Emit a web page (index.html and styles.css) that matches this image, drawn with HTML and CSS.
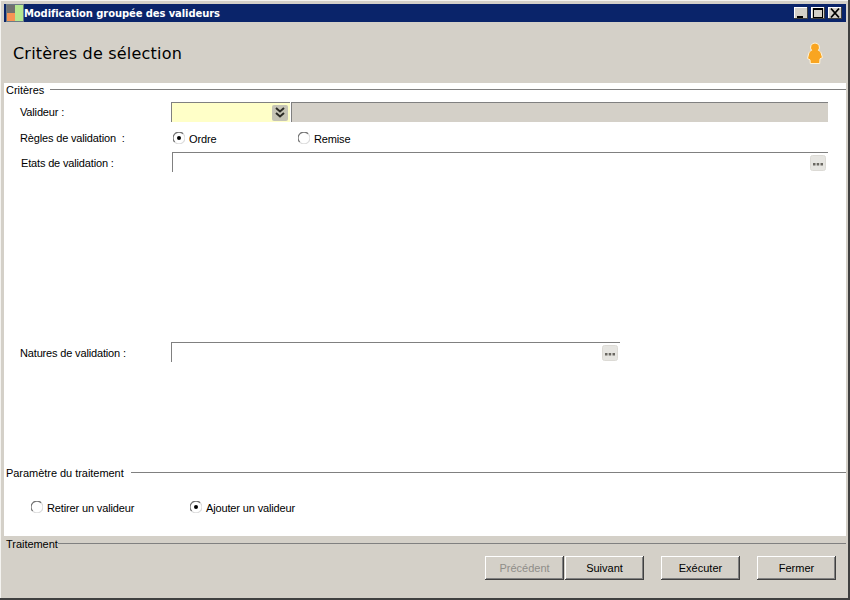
FILE: index.html
```html
<!DOCTYPE html>
<html lang="fr">
<head>
<meta charset="utf-8">
<title>Modification groupée des valideurs</title>
<link rel="stylesheet" href="styles.css">
</head>
<body>
<svg class="defs" width="0" height="0" aria-hidden="true">
  <symbol id="radio" viewBox="0 0 12 12">
    <circle cx="6" cy="6" r="5.5" fill="#fff"/>
    <path d="M1.800 10.200A5.500 5.500 0 0 1 10.200 1.800" fill="none" stroke="#777" stroke-width="1.200"/>
    <path d="M10.200 1.800A5.500 5.500 0 0 1 1.800 10.200" fill="none" stroke="#ddd" stroke-width="1.200"/>
  </symbol>
  <symbol id="dots" viewBox="0 0 16 16">
    <rect x=".5" y=".5" width="15" height="15" rx="2" fill="#e6e5e1" stroke="#dcdad5"/>
    <path d="M3 8h2.500v2.500H3zM6.700 8h2.500v2.500H6.700zM10.500 8H13v2.500h-2.500z" fill="#6a6862"/>
  </symbol>
</svg>
<div class="window">
  <div class="titlebar">
    <svg class="app-icon" width="18" height="18" viewBox="0 0 18 18"><rect width="18" height="18" fill="#6b7b86"/><rect x="1" y="1" width="8" height="8" fill="#71716f"/><rect x="1" y="9" width="8" height="8" fill="#f79455"/><rect x="9" y="1" width="8" height="16" fill="#b5e890"/></svg>
    <span class="title">Modification groupée des valideurs</span>
    <div class="win-controls">
      <span class="win-btn"><svg width="14" height="12" viewBox="0 0 14 12"><path d="M3 9h6v2H3z"/></svg></span>
      <span class="win-btn"><svg width="14" height="12" viewBox="0 0 14 12"><path d="M2 1h10v10H2zM3 3v7h8V3z" fill-rule="evenodd"/></svg></span>
      <span class="win-btn"><svg width="14" height="12" viewBox="0 0 14 12"><path d="M3 1.500l8 9M11 1.500l-8 9" stroke="#000" stroke-width="1.800" fill="none"/></svg></span>
    </div>
  </div>
  <header class="page-head">
    <h1>Critères de sélection</h1>
    <svg class="person" width="18" height="24" viewBox="0 0 18 24">
      <path d="M9 1a4.500 4.500 0 0 1 3.400 7.400c1.600.6 2.600 1.800 3 3.600l1.100 3.500-2.500 1.300-.3 4.700H4.300L4 17.800l-2.500-1.300L2.600 12c.4-1.800 1.400-3 3-3.600A4.500 4.500 0 0 1 9 1z" fill="#f9a521" stroke="#fff3d8" stroke-width="1"/>
    </svg>
  </header>
  <main class="content">
    <div class="legend legend-criteres"><span>Critères</span></div>
    <div class="row row-valideur">
      <label class="lbl">Valideur :</label>
      <div class="combo"><svg class="combo-btn" width="16" height="16" viewBox="0 0 16 16"><rect width="16" height="16" rx="2" fill="#c5c3b5"/><path d="M4 3l4 3.500L12 3M4 8l4 3.500L12 8" fill="none" stroke="#2b2b25" stroke-width="2"/></svg></div>
      <div class="combo-desc"></div>
    </div>
    <div class="row row-regles">
      <label class="lbl">Règles de validation&nbsp; :</label>
      <div class="radio-group">
        <span class="radio"><svg width="12" height="12"><use href="#radio"/><circle cx="6" cy="6" r="2" fill="#000"/></svg>Ordre</span>
        <span class="radio"><svg width="12" height="12"><use href="#radio"/></svg>Remise</span>
      </div>
    </div>
    <div class="row row-etats">
      <label class="lbl lbl-etats">Etats de validation :</label>
      <div class="listbox listbox-etats"><svg width="16" height="16"><use href="#dots"/></svg></div>
    </div>
    <div class="row row-natures">
      <label class="lbl lbl-natures">Natures de validation :</label>
      <div class="listbox listbox-natures"><svg width="16" height="16"><use href="#dots"/></svg></div>
    </div>
    <div class="legend legend-param"><span>Paramètre du traitement</span></div>
    <div class="radio-group treatment">
      <span class="radio"><svg width="12" height="12"><use href="#radio"/></svg>Retirer un valideur</span>
      <span class="radio"><svg width="12" height="12"><use href="#radio"/><circle cx="6" cy="6" r="2" fill="#000"/></svg>Ajouter un valideur</span>
    </div>
  </main>
  <footer class="footer">
    <div class="legend legend-trait"><span>Traitement</span></div>
    <div class="actions">
      <button class="btn" disabled>Précédent</button>
      <button class="btn btn-next">Suivant</button>
      <button class="btn">Exécuter</button>
      <button class="btn">Fermer</button>
    </div>
  </footer>
</div>
</body>
</html>
```
FILE: styles.css
```css
* { box-sizing: border-box; }
html, body { margin: 0; padding: 0; }
body { width: 850px; height: 600px; overflow: hidden; font-family: "Liberation Sans", Arial, sans-serif; font-size: 11px; color: #000; background: #d4d0c8; }
.defs { display: block; height: 0; position: absolute; }

.window { width: 850px; height: 600px; padding: 4px; display: flex; flex-direction: column; background: #d4d0c8; box-shadow: inset -2px -2px 0 #404040, inset 1px 1px 0 #f4f3f0; }

.titlebar { height: 18px; flex: none; display: flex; align-items: center; padding-left: 2px; background: #0a246a; color: #fff; }
.app-icon { flex: none; }
.title { margin-left: 0; font: bold 10px "DejaVu Sans", sans-serif; letter-spacing: -.1px; }
.win-controls { margin-left: auto; display: flex; gap: 3px; padding-right: 4px; }
.win-btn { width: 14px; height: 12px; display: block; background: #d4d0c8; box-shadow: inset -1px -1px 0 #404040, inset 1px 1px 0 #fff; }
.win-btn svg { display: block; }

.page-head { height: 61px; flex: none; display: flex; align-items: center; justify-content: space-between; padding: 0 22px 0 9px; }
.page-head h1 { margin: 2px 0 0; font: 400 16px "DejaVu Sans", sans-serif; letter-spacing: .2px; }
.person { margin-top: 3px; }

.content { height: 453px; flex: none; background: #fff; display: flex; flex-direction: column; position: relative; }

.legend { display: flex; align-items: center; gap: 6px; padding-left: 2px; line-height: 13px; height: 13px; }
.legend span { padding-top: 1px; letter-spacing: -.04px; }
.legend::after { content: ""; flex: 1; height: 1px; background: #808080; }
.legend-param { margin-top: 104px; gap: 7px; }
.legend-trait { gap: 0; margin-top: 1px; }

.row { display: flex; padding-left: 16px; }
.lbl { width: 151px; flex: none; line-height: 14px; padding-top: 3px; letter-spacing: -.16px; }
.lbl-etats { padding-left: 1px; padding-top: 4px; width: 152px; }
.lbl-natures { padding-top: 4px; }
.row-valideur { margin-top: 6px; height: 21px; }
.combo { width: 119px; height: 20px; background: #ffffc8; border-top: 1px solid #808080; border-left: 1px solid #808080; position: relative; }
.combo-btn { position: absolute; right: 2px; top: 2px; }
.combo-desc { width: 537px; margin-left: 1px; height: 20px; background: #d4d0c8; border-top: 1px solid #808080; border-left: 1px solid #808080; }

.row-regles { margin-top: 5px; height: 20px; }
.radio-group { display: flex; margin-left: 2px; }
.radio { width: 125px; display: flex; align-items: flex-start; gap: 4px; line-height: 14px; padding-top: 4px; letter-spacing: -.14px; }
.radio svg { flex: none; }

.row-etats { margin-top: 4px; height: 190px; }
.listbox { position: relative; height: 20px; border-top: 1px solid #808080; border-left: 1px solid #808080; display: flex; justify-content: flex-end; padding: 2px 2px 0 0; }
.listbox-etats { width: 656px; }
.listbox-natures { width: 449px; }
.row-natures { height: 20px; }

.treatment { margin: 21px 0 0 27px; }
.treatment .radio { width: 159px; padding-top: 1px; }

.footer { flex: 1; display: flex; flex-direction: column; }
.actions { margin-top: 6px; display: flex; padding-left: 481px; }
.btn { width: 79px; height: 24px; padding: 0; font: 11px "Liberation Sans", Arial, sans-serif; color: #000; background: #d4d0c8; border: 0; box-shadow: inset -1px -1px 0 #404040, inset 1px 1px 0 #fff, inset -2px -2px 0 #808080; }
.btn:disabled { color: #8f8d88; }
.btn-next { margin-left: 1px; margin-right: 17px; }
.btn:last-child { margin-left: 17px; }
```
